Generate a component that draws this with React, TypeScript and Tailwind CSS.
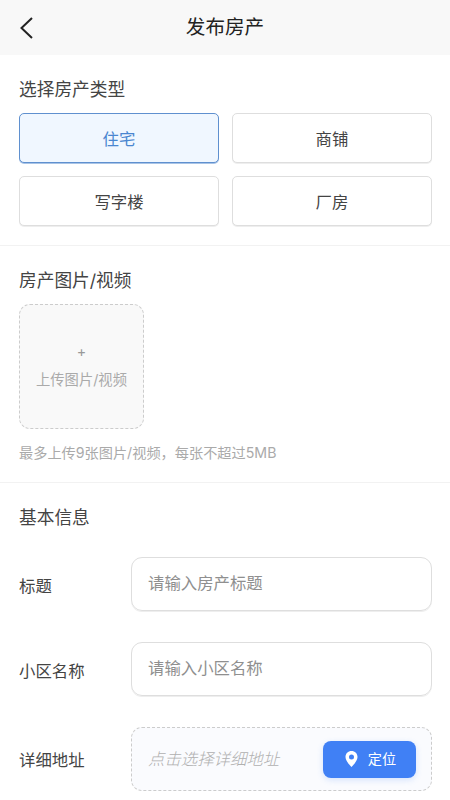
const font = { fontFamily: 'Inter, "Noto Sans CJK SC", "Noto Sans", sans-serif' };

function TypeButton({ label, active }: { label: string; active?: boolean }) {
  return (
    <button
      className={
        active
          ? 'h-[50px] rounded-[5px] border border-[#5f90cf] bg-[#f0f7ff] pt-[2px] text-[16.4px] text-[#4a86d0] shadow-[0_1px_0_#a9c4e6]'
          : 'h-[50px] rounded-[5px] border border-[#dedede] bg-white pt-[2px] text-[16.4px] text-[#444444] shadow-[0_1px_0_#eeeeee]'
      }
    >
      {label}
    </button>
  );
}

function InputRow({ label, placeholder }: { label: string; placeholder: string }) {
  return (
    <div className="flex items-center">
      <div className="w-[112px] pt-[3px] text-[16.4px] leading-[24px] text-[#444444]">{label}</div>
      <div className="flex h-[54px] flex-1 items-center rounded-[11px] border border-[#dedede] pb-[1px] pl-[16px] text-[16.4px] text-[#8f8f8f] shadow-[0_1px_0_#eeeeee]">
        {placeholder}
      </div>
    </div>
  );
}

export default function App() {
  return (
    <div className="h-[800px] w-[450px] overflow-hidden bg-white" style={font}>
      <header className="relative flex h-[55px] items-center justify-center bg-[#f8f8f8]">
        <svg className="absolute left-[19px] top-[16px]" width="16" height="24" viewBox="0 0 16 24" fill="none">
          <path d="M13 2 2.500 12 13 22" stroke="#222222" strokeWidth="2" />
        </svg>
        <h1 className="text-[19.6px] font-normal text-[#222222]">发布房产</h1>
      </header>

      <section className="border-b border-[#f2f2f2] pb-[19px] pl-[19px] pr-[18px] pt-[21px]">
        <h2 className="mb-[10px] text-[17.7px] leading-[27px] text-[#444444]">选择房产类型</h2>
        <div className="grid grid-cols-2 gap-x-[13px] gap-y-[13px]">
          <TypeButton label="住宅" active />
          <TypeButton label="商铺" />
          <TypeButton label="写字楼" />
          <TypeButton label="厂房" />
        </div>
      </section>

      <section className="border-b border-[#f2f2f2] px-[19px] pb-[19px] pt-[21px]">
        <h2 className="mb-[10px] text-[17.7px] leading-[27px] text-[#444444]">房产图片/视频</h2>
        <div className="flex h-[125px] w-[125px] flex-col items-center justify-center rounded-[11px] border border-dashed border-[#cccccc] bg-[#f9f9f9]">
          <div className="text-[14.3px] leading-[24px] text-[#999999]">+</div>
          <div className="pt-[2px] text-[14.3px] leading-[28px] text-[#aaaaaa]">上传图片/视频</div>
        </div>
        <p className="mt-[13px] text-[14.2px] leading-[21px] text-[#aaaaaa]">最多上传9张图片/视频，每张不超过5MB</p>
      </section>

      <section className="pl-[19px] pr-[18px] pt-[21px]">
        <h2 className="mb-[26px] text-[17.7px] leading-[27px] text-[#444444]">基本信息</h2>
        <div className="flex flex-col gap-[31px]">
          <InputRow label="标题" placeholder="请输入房产标题" />
          <InputRow label="小区名称" placeholder="请输入小区名称" />
          <div className="flex items-center">
            <div className="w-[112px] pt-[2px] text-[16.4px] leading-[24px] text-[#444444]">详细地址</div>
            <div className="flex h-[64px] flex-1 items-center justify-between rounded-[11px] border border-dashed border-[#cccccc] bg-[#fafbfe] pl-[16px] pr-[15px]">
              <span className="text-[16.4px] font-light italic text-[#b0b0b0]">点击选择详细地址</span>
              <button className="flex h-[37px] w-[93px] items-center justify-center gap-[10px] rounded-[8px] bg-[#4080f5] pl-[2px] text-[14.2px] text-white shadow-[0_2px_6px_rgba(64,128,245,0.2)]">
                <svg width="13" height="16" viewBox="0 0 13 16">
                  <path
                    fillRule="evenodd"
                    d="M6.500 0C3 0 .5 2.600.5 6c0 3.800 4 8 6 10 2-2 6-6.200 6-10 0-3.400-2.500-6-6-6Zm0 3.600a2.500 2.500 0 1 1 0 5 2.500 2.500 0 0 1 0-5Z"
                    fill="#ffffff"
                  />
                </svg>
                定位
              </button>
            </div>
          </div>
        </div>
      </section>
    </div>
  );
}
